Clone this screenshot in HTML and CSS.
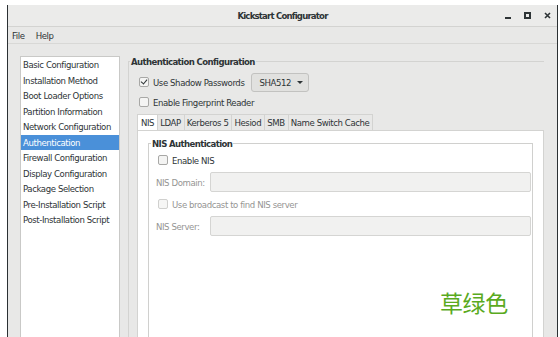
FILE: index.html
```html
<!DOCTYPE html>
<html>
<head>
    <title>Kickstart Configurator</title>
    <link rel="stylesheet" href="styles.css">
</head>
<body>
  <div class="window">
    <div class="titlebar">
      <span class="title">Kickstart Configurator</span>
      <div class="controls">
        <span class="ctl min"></span>
        <span class="ctl max"></span>
        <span class="ctl close">
          <svg width="7" height="7" viewBox="0 0 7 7"><path d="M1 1L6 6M6 1L1 6" stroke="#2e3436" stroke-width="1.6"/></svg>
        </span>
      </div>
    </div>
    <div class="menubar">
      <span>File</span>
      <span>Help</span>
    </div>

    <div class="main">
      <ul class="sidebar">
        <li>Basic Configuration</li>
        <li>Installation Method</li>
        <li>Boot Loader Options</li>
        <li>Partition Information</li>
        <li>Network Configuration</li>
        <li class="selected">Authentication</li>
        <li>Firewall Configuration</li>
        <li>Display Configuration</li>
        <li>Package Selection</li>
        <li>Pre-Installation Script</li>
        <li>Post-Installation Script</li>
      </ul>

      <fieldset class="frame">
        <legend>Authentication Configuration</legend>
        <div class="row">
          <span class="check checked"></span>
          <span class="label">Use Shadow Passwords</span>
          <span class="combo">SHA512 <span class="arrow"></span></span>
        </div>
        <div class="row">
          <span class="check"></span>
          <span class="label">Enable Fingerprint Reader</span>
        </div>

        <div class="tabs">
          <span class="tab active">NIS</span>
          <span class="tab">LDAP</span>
          <span class="tab">Kerberos 5</span>
          <span class="tab">Hesiod</span>
          <span class="tab">SMB</span>
          <span class="tab">Name Switch Cache</span>
        </div>
        <div class="page">
          <fieldset class="frame inner">
            <legend>NIS Authentication</legend>
            <div class="row">
              <span class="check"></span>
              <span class="label">Enable NIS</span>
            </div>
            <div class="row field">
              <span class="dim name">NIS Domain:</span>
              <span class="entry"></span>
            </div>
            <div class="row">
              <span class="check off"></span>
              <span class="dim">Use broadcast to find NIS server</span>
            </div>
            <div class="row field">
              <span class="dim name">NIS Server:</span>
              <span class="entry"></span>
            </div>
          </fieldset>
        </div>
      </fieldset>
    </div>
  </div>
  <div class="watermark">草绿色</div>
</body>
</html>
```

FILE: styles.css
```css
body {
    margin: 0;
    background: #ffffff;
    font-family: "DejaVu Sans Condensed", "Roboto", sans-serif;
    font-size: 9.5px;
    letter-spacing: -0.4px;
    color: #2e3436;
    overflow: hidden;
}

.window {
    margin: 5px 2px 0 7px;
    height: 340px;
    border-left: 1px solid #2b3033;
    border-right: 1px solid #2b3033;
    background: #e8e8e7;
    display: flex;
    flex-direction: column;
}

.titlebar {
    height: 21px;
    border-bottom: 1px solid #d3d3d1;
    background: #ebebea;
    display: flex;
    align-items: center;
    justify-content: center;
    position: relative;
}

.title {
    font-weight: bold;
    letter-spacing: -0.8px;
}

.controls {
    position: absolute;
    right: 6px;
    top: 7px;
    display: flex;
    align-items: flex-end;
}

.ctl {
    width: 7px;
    height: 7px;
    display: block;
    box-sizing: border-box;
    margin-left: 13px;
}

.ctl.min {
    border-bottom: 2px solid #2e3436;
    width: 6px;
}

.ctl.max {
    border: 2px solid #2e3436;
}

.ctl svg {
    display: block;
}

.menubar {
    height: 16px;
    border-bottom: 1px solid #d8d8d6;
    display: flex;
    align-items: center;
    gap: 11px;
    padding-left: 4px;
}

.main {
    flex: 1;
    display: flex;
    padding: 12px 13px 0 12px;
    gap: 8px;
    min-height: 0;
}

.sidebar {
    list-style: none;
    margin: 0;
    padding: 0;
    width: 100px;
    box-sizing: border-box;
    background: #ffffff;
    border: 1px solid #c9c9c7;
}

.sidebar li {
    height: 15.5px;
    line-height: 15px;
    padding-left: 2px;
    white-space: nowrap;
}

.sidebar li.selected {
    background: #4a90d9;
    color: #ffffff;
}

.frame {
    flex: 1;
    margin: 0;
    border: 1px solid #d3d3d1;
    border-right: none;
    border-bottom: none;
    padding: 5px 0 0 8px;
    min-width: 0;
}

.frame legend {
    font-weight: bold;
    letter-spacing: -0.6px;
    padding: 0 1px;
    margin-left: -7px;
}

.row {
    display: flex;
    align-items: center;
    height: 20px;
    margin-left: 2px;
    white-space: nowrap;
}

.check {
    width: 10px;
    height: 10px;
    flex: none;
    box-sizing: border-box;
    border: 1px solid #a8a8a6;
    border-radius: 2px;
    background: #f4f4f3;
    margin-right: 4px;
    position: relative;
}

.check.checked::after {
    content: "";
    position: absolute;
    left: 2px;
    top: 0px;
    width: 3px;
    height: 5px;
    border: solid #2e3436;
    border-width: 0 1.5px 1.5px 0;
    transform: rotate(40deg);
}

.check.off {
    border-color: #d0d0ce;
    background: #f6f6f5;
}

.combo {
    margin-left: 7px;
    height: 19px;
    width: 58px;
    box-sizing: border-box;
    border: 1px solid #c2c2c0;
    border-radius: 3px;
    background: #e1e1df;
    display: flex;
    align-items: center;
    padding-left: 7px;
    gap: 6px;
}

.arrow {
    width: 0;
    height: 0;
    border-left: 3px solid transparent;
    border-right: 3px solid transparent;
    border-top: 3px solid #2e3436;
}

.tabs {
    display: flex;
    margin-top: 2px;
    height: 16px;
}

.tab {
    padding: 0 3px 0 2px;
    border: 1px solid #d3d3d1;
    border-bottom: none;
    border-left: none;
    line-height: 15px;
    background: #e8e8e7;
}

.tab.active {
    background: #ffffff;
    border-left: 1px solid #d3d3d1;
    padding: 0 3px;
}

.page {
    background: #ffffff;
    border: 1px solid #d3d3d1;
    border-bottom: none;
    height: 220px;
    padding: 7px 10px 0 10px;
}

.frame.inner {
    height: 220px;
    padding: 0 0 0 8px;
    border-color: #d0d0ce;
    border-right: 1px solid #d0d0ce;
}

.inner legend {
    margin-left: -6px;
}

.inner .row {
    margin-left: 1px;
    height: 22px;
}

.field {
    margin-right: 1px;
}

.dim {
    color: #959593;
}

.name {
    width: 54px;
    margin-left: -2px;
}

.entry {
    flex: 1;
    height: 20px;
    box-sizing: border-box;
    background: #f1f1f0;
    border: 1px solid #d5d5d3;
    border-radius: 2px;
}

.watermark {
    position: absolute;
    left: 440px;
    top: 285px;
    font-family: "Noto Sans CJK SC", sans-serif;
    font-size: 23px;
    color: #5aaa1e;
}
```
